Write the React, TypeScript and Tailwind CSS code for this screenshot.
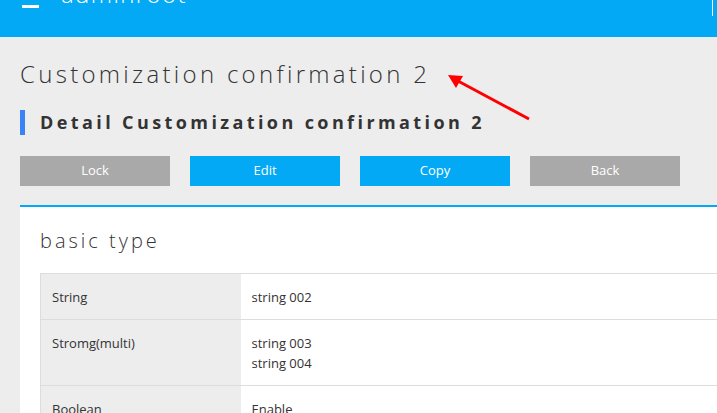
const rows: { label: string; values: string[] }[] = [
  { label: 'String', values: ['string 002'] },
  { label: 'Stromg(multi)', values: ['string 003', 'string 004'] },
  { label: 'Boolean', values: ['Enable'] },
  { label: 'Number', values: ['12'] },
];

const buttons = [
  { label: 'Lock', tone: 'bg-[#a9a9a9]' },
  { label: 'Edit', tone: 'bg-[#03a9f4]' },
  { label: 'Copy', tone: 'bg-[#03a9f4]' },
  { label: 'Back', tone: 'bg-[#a9a9a9]' },
];

export default function App() {
  return (
    <div
      className="relative h-[413px] w-[717px] overflow-hidden bg-[#ededed] text-[#333]"
      style={{ fontFamily: '"Open Sans", "Noto Sans", sans-serif' }}
    >
      {/* header (page is scrolled, so only the bottom shows) */}
      <header className="h-[37px] overflow-hidden bg-[#03a9f4] text-white">
        <div className="-mt-[20px] flex h-[28px] items-end">
          <div className="ml-[22px] flex w-[17px] flex-col gap-[5px]">
            <span className="block h-[3px] bg-white" />
            <span className="block h-[3px] bg-white" />
            <span className="block h-[3px] bg-white" />
          </div>
          <span className="ml-[22px] text-[24px] leading-[28px] font-light tracking-[1.4px]">adminroot</span>
          <span className="ml-auto mr-[4px] block h-[36px] w-px self-start bg-white" />
        </div>
      </header>

      <main className="px-5">
        <h1 className="mt-[21px] text-[24px] leading-[32px] font-light tracking-[3.3px] text-[#333]">
          Customization confirmation 2
        </h1>

        <h2 className="mt-[20px] flex items-center gap-[15px]">
          <span className="block h-[25px] w-[5px] bg-[#3b82f6]" />
          <span className="text-[18px] leading-[25px] font-bold tracking-[3.4px] text-[#333]">
            Detail Customization confirmation 2
          </span>
        </h2>

        <div className="mt-[21px] flex gap-5">
          {buttons.map((b) => (
            <button
              key={b.label}
              className={`h-[30px] w-[150px] text-[13px] text-white ${b.tone}`}
            >
              {b.label}
            </button>
          ))}
        </div>

        <section className="mt-[19px] w-[740px] border-t-2 border-[#03a9f4] bg-white px-5 pb-6">
          <h3 className="pt-[20px] text-[20px] leading-[28px] font-light tracking-[3px] text-[#333]">
            basic type
          </h3>
          <table className="mt-[18px] w-full border-collapse border border-[#ddd] text-[13px] leading-[20px]">
            <tbody>
              {rows.map((r) => (
                <tr key={r.label} className="border-b border-[#ddd]">
                  <td className="w-[200px] bg-[#ededed] px-[11px] pt-[13px] pb-[12px] align-top">{r.label}</td>
                  <td className="px-[11px] pt-[13px] pb-[12px] align-top">
                    {r.values.map((v) => (
                      <div key={v}>{v}</div>
                    ))}
                  </td>
                </tr>
              ))}
            </tbody>
          </table>
        </section>
      </main>

      {/* annotation arrow */}
      <svg className="pointer-events-none absolute left-0 top-0" width="717" height="413">
        <line x1="529" y1="119" x2="458" y2="81" stroke="#f00" strokeWidth="3" />
        <polygon points="448,75 463,76 456,88" fill="#f00" />
      </svg>
    </div>
  );
}
